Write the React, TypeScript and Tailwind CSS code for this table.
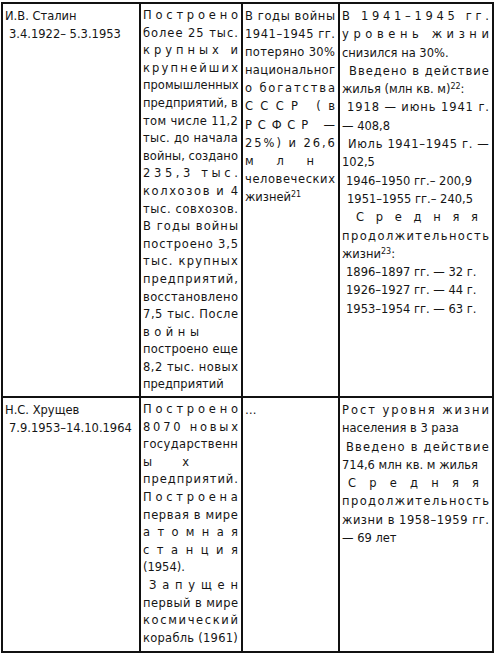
type Line = { t: string; j?: boolean; c?: string; sup?: string; after?: string }

const r1c1: Line[] = [{ t: 'И.В. Сталин' }, { t: '3.4.1922– 5.3.1953', c: 'pl-[4px]' }]

const r1c2: Line[] = [
  { t: 'Построено', j: true },
  { t: 'более 25 тыс.', j: true },
  { t: 'крупных и', j: true },
  { t: 'крупнейших', j: true },
  { t: 'промышленных', j: true },
  { t: 'предприятий, в', j: true },
  { t: 'том числе 11,2', j: true },
  { t: 'тыс. до начала', j: true },
  { t: 'войны, создано', j: true },
  { t: '235,3 тыс.', j: true },
  { t: 'колхозов и 4', j: true },
  { t: 'тыс. совхозов.', j: true },
  { t: 'В годы войны', j: true },
  { t: 'построено 3,5', j: true },
  { t: 'тыс. крупных', j: true },
  { t: 'предприятий,', j: true },
  { t: 'восстановлено', j: true },
  { t: '7,5 тыс. После', j: true },
  { t: 'войны', j: true, c: 'w-[56px]' },
  { t: 'построено еще', j: true },
  { t: '8,2 тыс. новых', j: true },
  { t: 'предприятий' },
]

const r1c3: Line[] = [
  { t: 'В годы войны', j: true },
  { t: '1941–1945 гг.', j: true },
  { t: 'потеряно 30%', j: true },
  { t: 'национальног', j: true },
  { t: 'о богатства', j: true },
  { t: 'СССР (в', j: true },
  { t: 'РСФСР —', j: true },
  { t: '25%) и 26,6', j: true },
  { t: 'млн', j: true, c: 'w-[69px]' },
  { t: 'человеческих', j: true },
  { t: 'жизней', sup: '21' },
]

const r1c4: Line[] = [
  { t: 'В 1941–1945 гг.', j: true },
  { t: 'уровень жизни', j: true },
  { t: 'снизился на 30%.' },
  { t: 'Введено в действие', j: true, c: 'pl-[7px]' },
  { t: 'жилья (млн кв. м)', sup: '22', after: ':' },
  { t: '1918 — июнь 1941 г.', j: true, c: 'pl-[5px]' },
  { t: '— 408,8' },
  { t: 'Июль 1941–1945 г. —', j: true, c: 'pl-[6px]' },
  { t: '102,5' },
  { t: '1946–1950 гг.– 200,9', c: 'pl-[4px]' },
  { t: '1951–1955 гг.– 240,5', c: 'pl-[5px]' },
  { t: 'Средняя', j: true, c: 'pl-[14px] pr-[11px]' },
  { t: 'продолжительность', j: true },
  { t: 'жизни', sup: '23', after: ':' },
  { t: '1896–1897 гг. — 32 г.', c: 'pl-[4px]' },
  { t: '1926–1927 гг. — 44 г.', c: 'pl-[4px]' },
  { t: '1953–1954 гг. — 63 г.', c: 'pl-[4px]' },
]

const r2c1: Line[] = [{ t: 'Н.С. Хрущев' }, { t: '7.9.1953–14.10.1964', c: 'pl-[4px]' }]

const r2c2: Line[] = [
  { t: 'Построено', j: true },
  { t: '8070 новых', j: true },
  { t: 'государственн', j: true },
  { t: 'ых', j: true, c: 'w-[46px]' },
  { t: 'предприятий.', j: true },
  { t: 'Построена', j: true },
  { t: 'первая в мире', j: true },
  { t: 'атомная', j: true },
  { t: 'станция', j: true },
  { t: '(1954).' },
  { t: 'Запущен', j: true, c: 'pl-[6px]' },
  { t: 'первый в мире', j: true },
  { t: 'космический', j: true },
  { t: 'корабль (1961)', j: true },
]

const r2c3: Line[] = [{ t: '…' }]

const r2c4: Line[] = [
  { t: 'Рост уровня жизни', j: true },
  { t: 'населения в 3 раза' },
  { t: 'Введено в действие', j: true, c: 'pl-[4px]' },
  { t: '714,6 млн кв. м жилья' },
  { t: 'Средняя', j: true, c: 'pl-[6px] pr-[10px]' },
  { t: 'продолжительность', j: true },
  { t: 'жизни в 1958–1959 гг.', j: true },
  { t: '— 69 лет' },
]

function TextLine({ line }: { line: Line }) {
  if (line.j) {
    return (
      <div className={`flex justify-between ${line.c ?? ''}`}>
        {Array.from(line.t).map((ch, k) => (
          <span key={k} className="whitespace-pre">
            {ch}
          </span>
        ))}
      </div>
    )
  }
  return (
    <div className={`whitespace-pre ${line.c ?? ''}`}>
      {line.t}
      {line.sup && <sup className="text-[8px]">{line.sup}</sup>}
      {line.after}
    </div>
  )
}

function Cell({ lines, lh }: { lines: Line[]; lh: string }) {
  return (
    <div className={`bg-white pl-[2px] pr-[3px] pt-[3px] ${lh}`}>
      {lines.map((l, k) => (
        <TextLine key={k} line={l} />
      ))}
    </div>
  )
}

export default function App() {
  return (
    <div className="min-h-[653px] w-[495px] bg-white pt-[2px] pl-[1px] font-['DejaVu_Sans',sans-serif] text-[11.5px] text-[#151515]">
      <div className="grid w-[493px] grid-cols-[136px_100px_95px_152px] grid-rows-[392px_253px] gap-[2px] bg-[#111] p-[2px]">
        <Cell lines={r1c1} lh="leading-[18px]" />
        <Cell lines={r1c2} lh="leading-[17.6px]" />
        <Cell lines={r1c3} lh="leading-[18.1px]" />
        <Cell lines={r1c4} lh="leading-[18.3px]" />
        <Cell lines={r2c1} lh="leading-[18px]" />
        <Cell lines={r2c2} lh="leading-[17.6px]" />
        <Cell lines={r2c3} lh="leading-[18px]" />
        <Cell lines={r2c4} lh="leading-[18.3px]" />
      </div>
    </div>
  )
}
